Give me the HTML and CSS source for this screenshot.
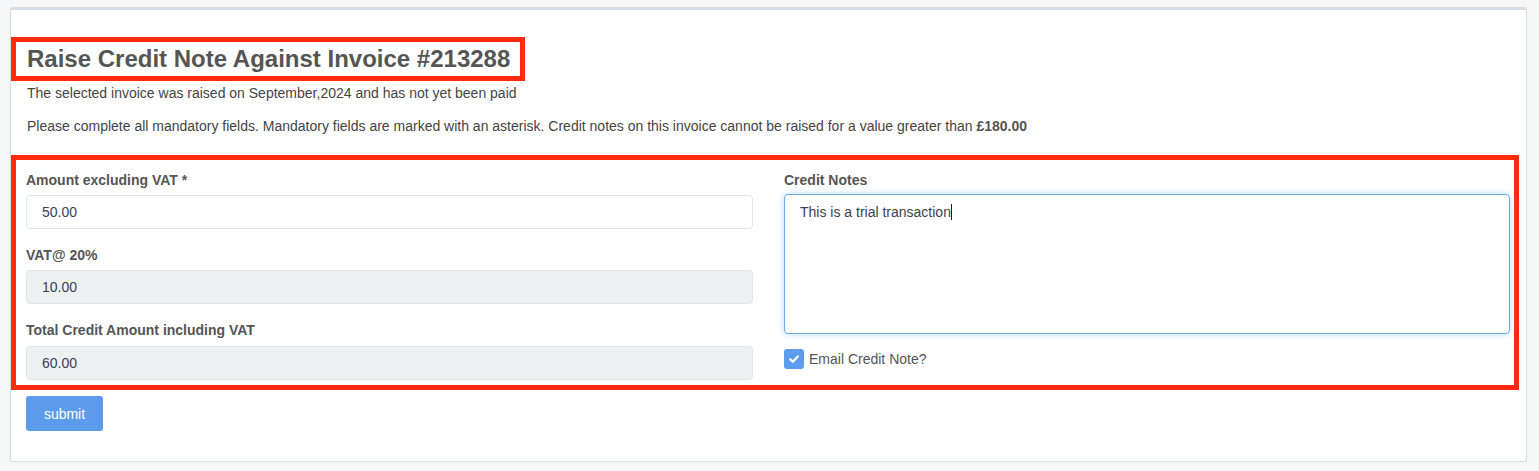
FILE: index.html
```html
<!DOCTYPE html>
<html>
    <head>
        <title>Raise Credit Note</title>
        <link rel="stylesheet" href="styles.css">
    </head>
    <body>
        <div class="card">

            <div class="title">
                Raise Credit Note Against Invoice #213288
            </div>

            <p class="intro">The selected invoice was raised on September,2024 and has not yet been paid</p>

            <p class="intro second">Please complete all mandatory fields. Mandatory fields are marked with an asterisk. Credit notes on this invoice cannot be raised for a value greater than <b>£180.00</b></p>

            <div class="form">

                <div class="col">
                    <label class="label">Amount excluding VAT *</label>
                    <input class="field" type="text" value="50.00">

                    <label class="label">VAT@ 20%</label>
                    <input class="field locked" type="text" value="10.00" disabled>

                    <label class="label">Total Credit Amount including VAT</label>
                    <input class="field locked" type="text" value="60.00" disabled>
                </div>

                <div class="col">
                    <label class="label">Credit Notes</label>
                    <div class="notes">This is a trial transaction<span class="caret"></span></div>

                    <div class="check">
                        <span class="box">
                            <svg width="12" height="12" viewBox="0 0 12 12">
                                <path d="M2.2 6.3 L4.8 8.8 L9.8 3.4" fill="none" stroke="#fff" stroke-width="2.2" stroke-linecap="round" stroke-linejoin="round"/>
                            </svg>
                        </span>
                        Email Credit Note?
                    </div>
                </div>

            </div>

            <button class="submit">submit</button>

        </div>
    </body>
</html>
```

FILE: styles.css
```css
body {

    margin: 0;
    background-color: #f6f6f6;
    font-family: "Liberation Sans", Arial, Helvetica, sans-serif;
    color: #444;

}

.card {

    margin: 7px 0 0 10px;
    width: 1517px;
    height: 455px;
    background-color: #fff;
    border: 1px solid #d5dee5;
    border-top: 3px solid #d3dde5;
    border-radius: 3px;
    box-sizing: border-box;

}

.title {

    margin-top: 27px;
    width: 514px;
    height: 44px;
    box-sizing: border-box;
    border: 5px solid #ff2a0c;
    padding-left: 11px;
    line-height: 34px;
    font-size: 24px;
    font-weight: bold;
    color: #555;

}

.intro {

    margin: 3px 0 0 16px;
    font-size: 14px;
    line-height: 18px;

}

.intro.second {

    margin-top: 15px;

}

.intro b {

    color: #555;

}

.form {

    margin-top: 20px;
    width: 1508px;
    height: 235px;
    box-sizing: border-box;
    border: 5px solid #ff2a0c;
    padding: 11px 0 0 10px;
    display: grid;
    grid-template-columns: 727px 726px;
    column-gap: 31px;

}

.col {

    display: flex;
    flex-direction: column;

}

.label {

    font-size: 14px;
    line-height: 18px;
    font-weight: bold;
    color: #555;
    margin-bottom: 6px;

}

.field {

    height: 34px;
    box-sizing: border-box;
    border: 1px solid #dde6e9;
    border-radius: 4px;
    padding: 0 15px;
    font-family: "Liberation Sans", Arial, Helvetica, sans-serif;
    font-size: 14px;
    color: #3a3f51;
    background-color: #fff;
    margin-bottom: 17px;

}

.field.locked {

    background-color: #edf1f2;
    color: #3a3f51;
    -webkit-text-fill-color: #3a3f51;

}

.field.locked:last-child {

    margin-top: 1px;

}

.notes {

    height: 140px;
    margin-top: -1px;
    box-sizing: border-box;
    border: 1px solid #66afe9;
    border-radius: 4px;
    box-shadow: 0 0 7px rgba(102, 175, 233, 0.45);
    padding: 8px 15px;
    font-size: 14px;
    line-height: 18px;
    color: #3a3f51;

}

.caret {

    display: inline-block;
    width: 1px;
    height: 16px;
    background-color: #222;
    vertical-align: -3px;

}

.check {

    margin-top: 15px;
    display: flex;
    align-items: center;
    font-size: 14px;
    color: #555;

}

.box {

    width: 20px;
    height: 20px;
    margin-right: 5px;
    border-radius: 3px;
    background-color: #5d9cec;
    display: flex;
    align-items: center;
    justify-content: center;

}

.submit {

    margin: 6px 0 0 15px;
    width: 77px;
    height: 35px;
    border: none;
    border-radius: 3px;
    background-color: #5d9cec;
    color: #fff;
    font-family: "Liberation Sans", Arial, Helvetica, sans-serif;
    font-size: 14px;

}
```
